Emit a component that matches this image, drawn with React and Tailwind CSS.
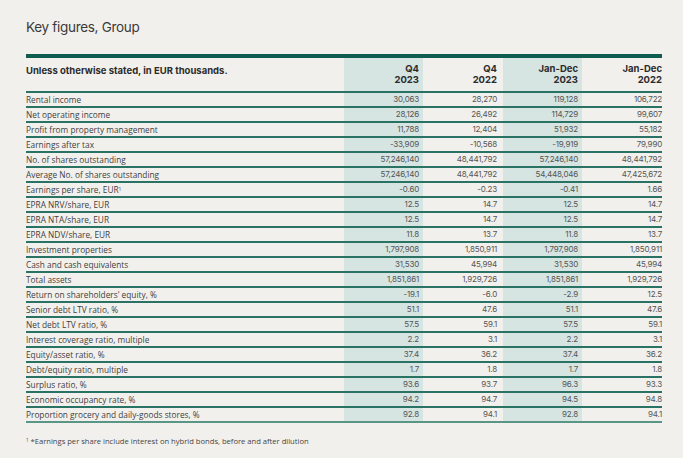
const rows = [
  ['Rental income', '30,063', '28,270', '119,128', '106,722'],
  ['Net operating income', '28,126', '26,492', '114,729', '99,607'],
  ['Profit from property management', '11,788', '12,404', '51,932', '55,182'],
  ['Earnings after tax', '-33,909', '-10,568', '-19,919', '79,990'],
  ['No. of shares outstanding', '57,246,140', '48,441,792', '57,246,140', '48,441,792'],
  ['Average No. of shares outstanding', '57,246,140', '48,441,792', '54,448,046', '47,425,672'],
  ['Earnings per share, EUR¹', '-0.60', '-0.23', '-0.41', '1.66'],
  ['EPRA NRV/share, EUR', '12.5', '14.7', '12.5', '14.7'],
  ['EPRA NTA/share, EUR', '12.5', '14.7', '12.5', '14.7'],
  ['EPRA NDV/share, EUR', '11.8', '13.7', '11.8', '13.7'],
  ['Investment properties', '1,797,908', '1,850,911', '1,797,908', '1,850,911'],
  ['Cash and cash equivalents', '31,530', '45,994', '31,530', '45,994'],
  ['Total assets', '1,851,861', '1,929,726', '1,851,861', '1,929,726'],
  ["Return on shareholders' equity, %", '-19.1', '-6.0', '-2.9', '12.5'],
  ['Senior debt LTV ratio, %', '51.1', '47.6', '51.1', '47.6'],
  ['Net debt LTV ratio, %', '57.5', '59.1', '57.5', '59.1'],
  ['Interest coverage ratio, multiple', '2.2', '3.1', '2.2', '3.1'],
  ['Equity/asset ratio, %', '37.4', '36.2', '37.4', '36.2'],
  ['Debt/equity ratio, multiple', '1.7', '1.8', '1.7', '1.8'],
  ['Surplus ratio, %', '93.6', '93.7', '96.3', '93.3'],
  ['Economic occupancy rate, %', '94.2', '94.7', '94.5', '94.8'],
  ['Proportion grocery and daily-goods stores, %', '92.8', '94.1', '92.8', '94.1'],
];

const heads = [
  ['Q4', '2023'],
  ['Q4', '2022'],
  ['Jan-Dec', '2023'],
  ['Jan-Dec', '2022'],
];

const colCls = [
  'bg-[#d6e4e2] pr-[4px]',
  'pr-[6px]',
  'bg-[#d6e4e2] pr-[4px]',
  'pr-0',
];

export default function App() {
  return (
    <div className="w-[683px] h-[458px] bg-[#f2f0ec] pl-[26px] pt-[17px] font-['Open_Sans',sans-serif] text-[#3c3c3c]">
      <h1 className="text-[13.5px] leading-[20px] text-[#3a3a3a] font-['Inter',sans-serif] tracking-[-0.3px]">
        Key figures, Group
      </h1>

      <div className="w-[636px] mt-[17px]">
        <div className="h-[4px] bg-[#0f5c50]" />
        <div className="grid grid-cols-[318px_79px_80px_79px_80px]">
          <div className="border-b-2 border-[#2a7263] pt-[6px] h-[35px] text-[9.5px] font-bold font-['Inter',sans-serif] text-[#2b2b2b]">
            Unless otherwise stated, in EUR thousands.
          </div>
          {heads.map((h, i) => (
            <div
              key={i}
              className={`border-b-2 border-[#2a7263] pt-[5px] h-[35px] text-right text-[9.5px] leading-[11px] font-bold font-['Inter',sans-serif] text-[#2b2b2b] ${colCls[i]}`}
            >
              <div>{h[0]}</div>
              <div>{h[1]}</div>
            </div>
          ))}

          {rows.map((r, ri) => {
            const last = ri === rows.length - 1;
            const b = last ? 'border-[#5a9685]' : 'border-[#2a7263]';
            return [
              <div key={ri + 'l'} className={`border-b-2 ${b} h-[15px] text-[8.3px] leading-[13px] text-[#404040] whitespace-nowrap`}>
                {r[0].endsWith('¹') ? (
                  <>
                    {r[0].slice(0, -1)}
                    <sup className="text-[5px]">1</sup>
                  </>
                ) : (
                  r[0]
                )}
              </div>,
              ...r.slice(1).map((v, ci) => (
                <div
                  key={ri + '-' + ci}
                  className={`border-b-2 ${b} h-[15px] text-right text-[8px] leading-[13px] text-[#555] font-['Inter',sans-serif] tracking-[-0.2px] ${colCls[ci]}`}
                >
                  {v}
                </div>
              )),
            ];
          })}
        </div>
      </div>

      <p className="mt-[13px] text-[7.6px] text-[#444]">
        <sup className="text-[4.5px]">1</sup> *Earnings per share include interest on hybrid bonds, before and after dilution
      </p>
    </div>
  );
}
